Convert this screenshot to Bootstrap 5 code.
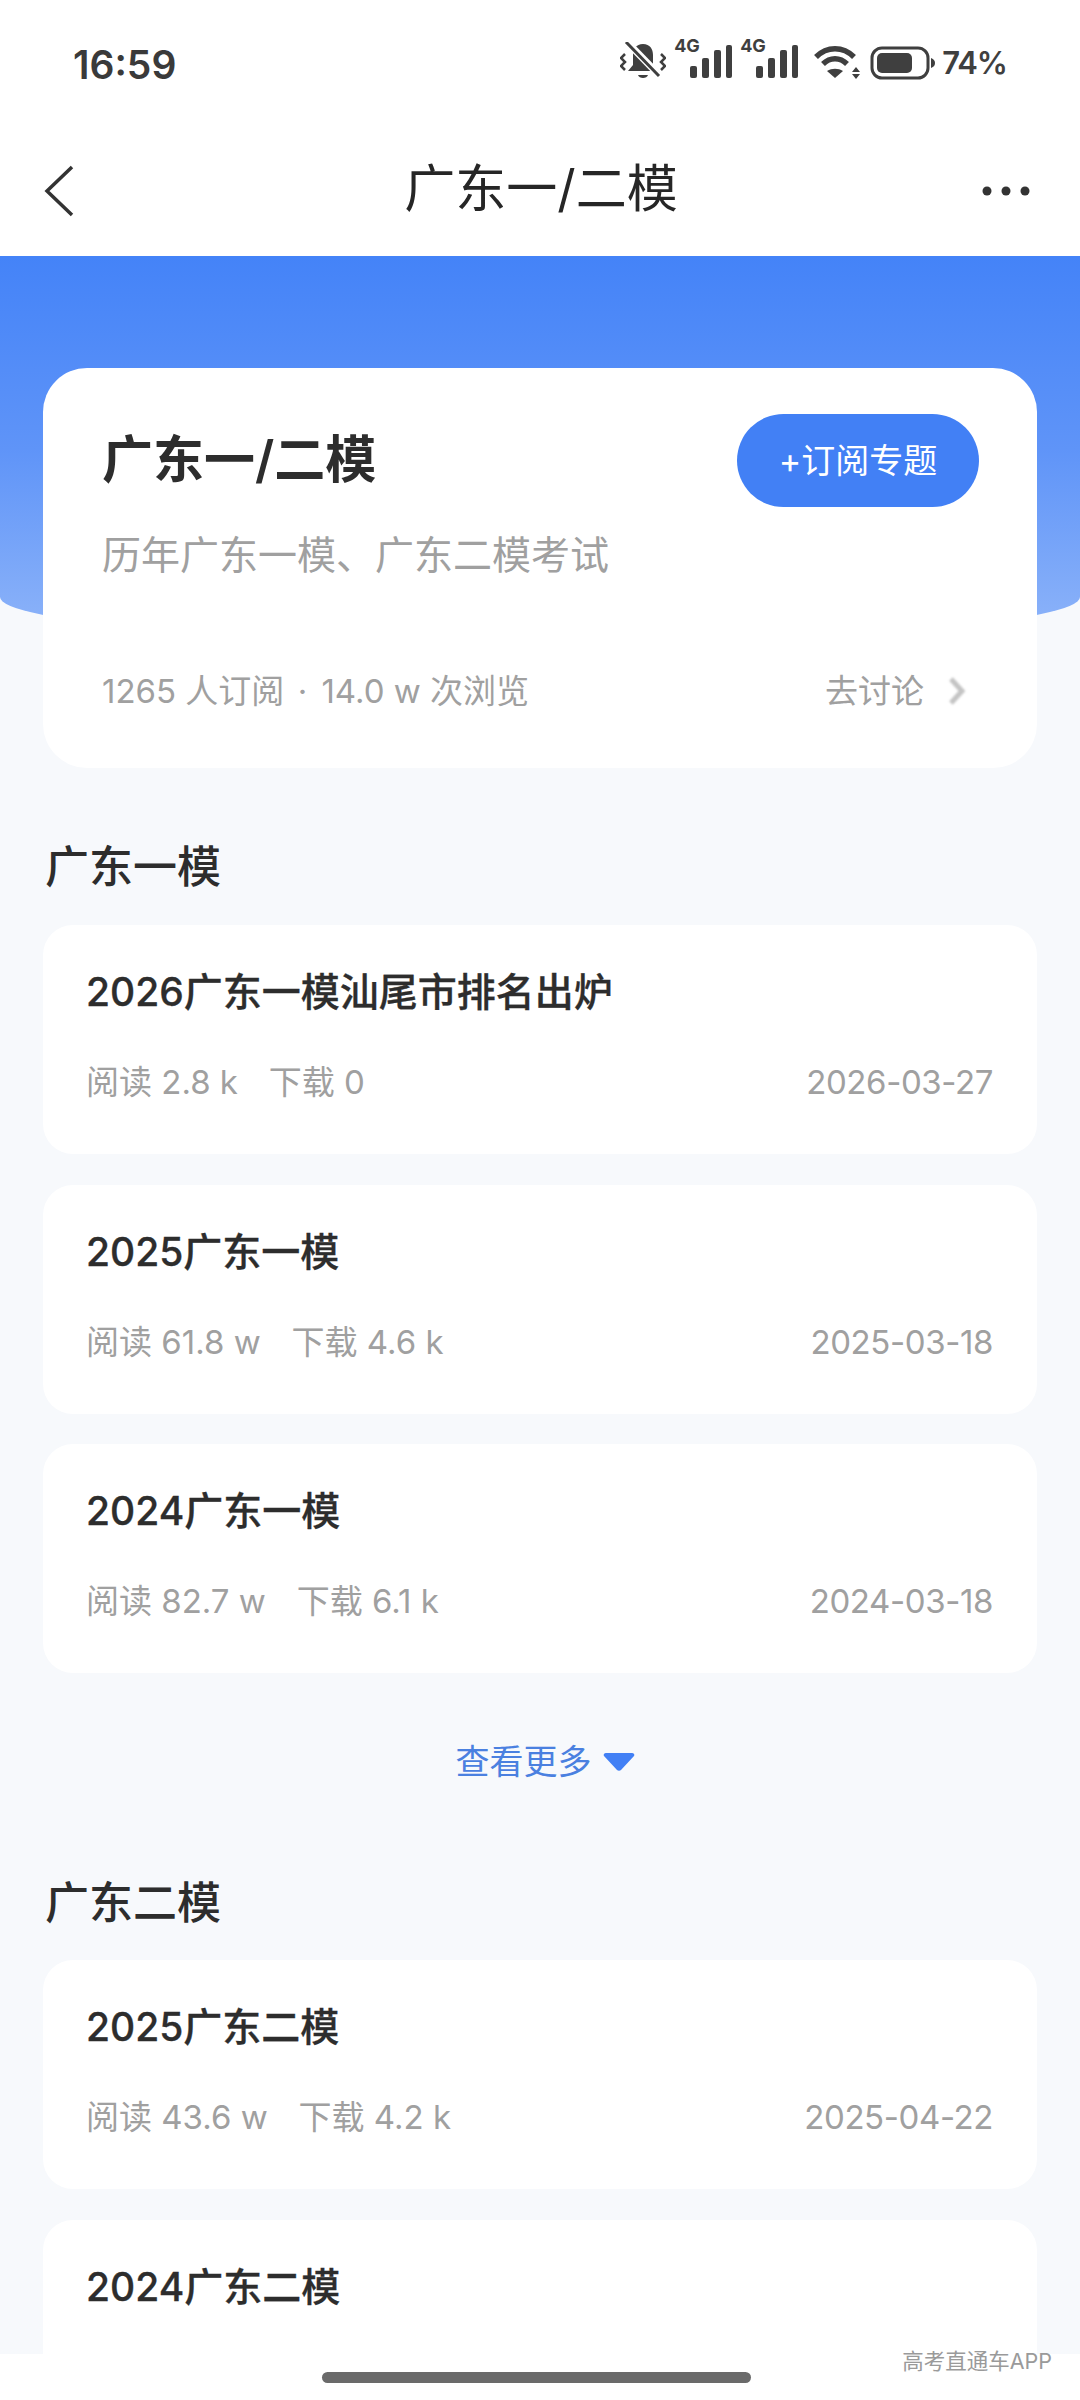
<!DOCTYPE html>
<html lang="zh-CN">
<head>
    <meta charset="UTF-8">
    <meta name="viewport" content="width=device-width, initial-scale=1.0">
    <title>广东一/二模</title>
    <link href="https://cdn.jsdelivr.net/npm/bootstrap@5.3.0/dist/css/bootstrap.min.css" rel="stylesheet">
    <style>
        :root {
            --page-bg: #f7f9fc;
            --ink: #2e2e2e;
            --muted: #a0a0a0;
            --blue: #4280f5;
        }

        html, body {
            height: 2400px;
            overflow: hidden;
        }

        body {
            background-color: var(--page-bg);
            font-family: "Inter", "Noto Sans CJK SC", sans-serif;
            color: var(--ink);
            position: relative;
        }

        /* status bar + title bar */
        .top-area {
            background-color: #fff;
            height: 256px;
        }

        .status-row {
            height: 125px;
            padding: 40px 73px 0 73px;
        }

        .clock {
            font-size: 39px;
            font-weight: 600;
            line-height: 50px;
            color: #3a3a3a;
        }

        .net-mark {
            font-size: 18px;
            font-weight: 700;
            line-height: 18px;
            color: #3f3f3f;
            position: absolute;
            top: -3px;
            left: 0;
        }

        .net-box {
            position: relative;
            width: 58px;
            height: 46px;
        }

        .pct {
            font-size: 31px;
            font-weight: 600;
            letter-spacing: -1px;
            line-height: 40px;
            color: #3f3f3f;
            margin-left: 6px;
        }

        .batt-icon {
            margin-left: 10px;
        }

        .title-row {
            height: 131px;
            padding: 0 49px 0 43px;
        }

        .page-title {
            font-size: 51px;
            line-height: 66px;
            font-weight: 400;
            color: #262626;
            margin: 0 0 3px 24px;
        }

        /* blue band, sits behind the summary card */
        .blue-band {
            position: absolute;
            top: 256px;
            left: 0;
            width: 1080px;
            height: 387px;
            background: linear-gradient(180deg, #4483f8 0%, #5f94f8 50%, #8fb5f9 100%);
            border-radius: 0 0 540px 540px / 0 0 46px 46px;
        }

        .content-wrap {
            position: relative;
            padding: 112px 43px 0;
        }

        .summary-box {
            background-color: #fff;
            border-radius: 44px;
            height: 400px;
            padding: 46px 58px 0 59px;
        }

        .summary-title {
            font-size: 51px;
            line-height: 70px;
            font-weight: 600;
            margin: 11px 0 0;
            color: #2d2d2d;
        }

        .sub-btn {
            background-color: var(--blue);
            color: #fff;
            border: none;
            border-radius: 47px;
            width: 242px;
            height: 93px;
            font-size: 34px;
            padding: 0;
        }

        .summary-desc {
            font-size: 39px;
            line-height: 54px;
            color: var(--muted);
            margin-top: 21px;
        }

        .summary-foot {
            font-size: 33px;
            line-height: 46px;
            color: var(--muted);
            margin-top: 86px;
        }

        .dot-sep {
            margin: 0 5px 0 4px;
        }

        .go-talk {
            padding-right: 13px;
        }

        .go-arrow {
            filter: blur(.8px);
        }

        .section-head {
            font-size: 44px;
            line-height: 60px;
            font-weight: 500;
            color: #2d2d2d;
            margin: 0 0 0 2px;
        }

        .exam-box {
            background-color: #fff;
            border-radius: 30px;
            height: 229px;
            padding: 39px 44px 0 43px;
            margin-bottom: 30.5px;
        }

        .exam-name {
            font-size: 39px;
            line-height: 56px;
            font-weight: 500;
            -webkit-text-stroke: .3px #2d2d2d;
            color: #2d2d2d;
            margin: 0;
        }

        .exam-meta {
            font-size: 33px;
            line-height: 46px;
            color: var(--muted);
            margin-top: 39px;
        }

        .stat-gap {
            margin-left: 3px;
        }

        .date-txt {
            letter-spacing: -.4px;
        }

        .more-link {
            font-size: 34px;
            line-height: 46px;
            color: #4a80e0;
            height: 50px;
            padding-left: 10px;
            gap: 11px;
        }

        .bottom-bar {
            position: absolute;
            left: 0;
            top: 2354px;
            width: 1080px;
            height: 46px;
            background-color: #fff;
        }

        .home-pill {
            position: absolute;
            left: 322px;
            top: 18px;
            width: 429px;
            height: 11px;
            border-radius: 6px;
            background-color: #6a6a6a;
        }

        .watermark {
            position: absolute;
            right: 28px;
            top: 2345px;
            font-size: 21.5px;
            line-height: 32px;
            color: #9a9a9a;
        }
    </style>
</head>
<body>
    <!-- Status bar and title -->
    <div class="top-area">
        <div class="status-row d-flex justify-content-between align-items-start">
            <div class="clock">16:59</div>
            <div class="d-flex align-items-center">
                <svg width="46" height="42" viewBox="0 0 46 42" class="me-2">
                    <path d="M23 2c-7 0-10 5-10 11v10l-5 6h30l-5-6V13c0-6-3-11-10-11z" fill="#3f3f3f"/>
                    <path d="M18 33h10c-1 4-9 4-10 0z" fill="#3f3f3f"/>
                    <path d="M7 0l33 34" stroke="#fff" stroke-width="7"/>
                    <path d="M6 0l33 34" stroke="#3f3f3f" stroke-width="3"/>
                    <path d="M5 12l-4 4 4 4-4 4 4 4M41 12l4 4-4 4 4 4-4 4" stroke="#3f3f3f" stroke-width="2.5" fill="none"/>
                </svg>
                <div class="net-box me-2">
                    <span class="net-mark">4G</span>
                    <svg width="58" height="46" viewBox="0 0 58 46">
                        <rect x="16" y="26" width="7" height="12" rx="2" fill="#3f3f3f"/>
                        <rect x="28" y="18" width="7" height="20" rx="2" fill="#3f3f3f"/>
                        <rect x="40" y="10" width="7" height="28" rx="2" fill="#3f3f3f"/>
                        <rect x="52" y="5" width="6" height="33" rx="2" fill="#3f3f3f"/>
                    </svg>
                </div>
                <div class="net-box">
                    <span class="net-mark">4G</span>
                    <svg width="58" height="46" viewBox="0 0 58 46">
                        <rect x="16" y="26" width="7" height="12" rx="2" fill="#3f3f3f"/>
                        <rect x="28" y="18" width="7" height="20" rx="2" fill="#3f3f3f"/>
                        <rect x="40" y="10" width="7" height="28" rx="2" fill="#3f3f3f"/>
                        <rect x="52" y="5" width="6" height="33" rx="2" fill="#3f3f3f"/>
                    </svg>
                </div>
                <svg width="46" height="34" viewBox="0 0 46 34" class="ms-3">
                    <path d="M2 11c11-11 27-11 38 0M9 18c7-7 17-7 24 0" stroke="#3f3f3f" stroke-width="5.5" fill="none"/>
                    <path d="M21 32l-8-7c5-3 11-3 16 0z" fill="#3f3f3f"/>
                    <path d="M42 21l4 5h-8zM42 33l4-5h-8z" fill="#3f3f3f"/>
                </svg>
                <svg class="batt-icon" width="66" height="34" viewBox="0 0 66 34">
                    <rect x="2" y="2" width="56" height="30" rx="10" fill="none" stroke="#3f3f3f" stroke-width="3"/>
                    <rect x="7" y="7" width="35" height="20" rx="5" fill="#3f3f3f"/>
                    <path d="M61 12c3 1 4 3 4 5s-1 4-4 5z" fill="#3f3f3f"/>
                </svg>
                <div class="pct">74%</div>
            </div>
        </div>
        <div class="title-row d-flex justify-content-between align-items-center">
            <svg width="34" height="54" viewBox="0 0 34 54">
                <path d="M29 3L4 27l25 24" fill="none" stroke="#333" stroke-width="3.5"/>
            </svg>
            <h1 class="page-title">广东一/二模</h1>
            <svg width="50" height="14" viewBox="0 0 50 14">
                <circle cx="6" cy="7" r="4.5" fill="#333"/>
                <circle cx="25" cy="7" r="4.5" fill="#333"/>
                <circle cx="44" cy="7" r="4.5" fill="#333"/>
            </svg>
        </div>
    </div>

    <div class="blue-band"></div>

    <div class="content-wrap">
        <!-- Summary card -->
        <div class="summary-box">
            <div class="d-flex justify-content-between align-items-start">
                <div class="summary-title">广东一/二模</div>
                <button class="btn sub-btn" type="button">+订阅专题</button>
            </div>
            <div class="summary-desc">历年广东一模、广东二模考试</div>
            <div class="summary-foot d-flex justify-content-between align-items-center">
                <span>1265 人订阅<span class="dot-sep"> · </span>14.0 w 次浏览</span>
                <span class="go-talk d-flex align-items-center gap-4">去讨论
                    <svg class="go-arrow" width="18" height="30" viewBox="0 0 18 30"><path d="M3 3l11 12L3 27" fill="none" stroke="#c4c4c4" stroke-width="5"/></svg>
                </span>
            </div>
        </div>

        <!-- 广东一模 -->
        <h2 class="section-head" style="margin-top:69px;margin-bottom:28px">广东一模</h2>
        <div class="exam-box">
            <p class="exam-name">2026广东一模汕尾市排名出炉</p>
            <div class="exam-meta d-flex justify-content-between"><span>阅读 2.8 k&nbsp;&nbsp;<span class="stat-gap"> 下载 0</span></span><span class="date-txt">2026-03-27</span></div>
        </div>
        <div class="exam-box">
            <p class="exam-name">2025广东一模</p>
            <div class="exam-meta d-flex justify-content-between"><span>阅读 61.8 w&nbsp;&nbsp;<span class="stat-gap"> 下载 4.6 k</span></span><span class="date-txt">2025-03-18</span></div>
        </div>
        <div class="exam-box">
            <p class="exam-name">2024广东一模</p>
            <div class="exam-meta d-flex justify-content-between"><span>阅读 82.7 w&nbsp;&nbsp;<span class="stat-gap"> 下载 6.1 k</span></span><span class="date-txt">2024-03-18</span></div>
        </div>

        <div class="more-link d-flex justify-content-center align-items-center" style="margin-top:64px">
            <span>查看更多</span>
            <svg width="32" height="20" viewBox="0 0 32 20"><path d="M3 1h26c2 0 3 2 2 3L18 18c-1 1-3 1-4 0L1 4C0 3 1 1 3 1z" fill="#4280f5"/></svg>
        </div>

        <!-- 广东二模 -->
        <h2 class="section-head" style="margin-top:86px;margin-bottom:27px">广东二模</h2>
        <div class="exam-box">
            <p class="exam-name">2025广东二模</p>
            <div class="exam-meta d-flex justify-content-between"><span>阅读 43.6 w&nbsp;&nbsp;<span class="stat-gap"> 下载 4.2 k</span></span><span class="date-txt">2025-04-22</span></div>
        </div>
        <div class="exam-box">
            <p class="exam-name">2024广东二模</p>
        </div>
    </div>

    <div class="bottom-bar"><div class="home-pill"></div></div>
    <div class="watermark">高考直通车APP</div>

    <script src="https://cdn.jsdelivr.net/npm/bootstrap@5.3.0/dist/js/bootstrap.bundle.min.js"></script>
</body>
</html>
